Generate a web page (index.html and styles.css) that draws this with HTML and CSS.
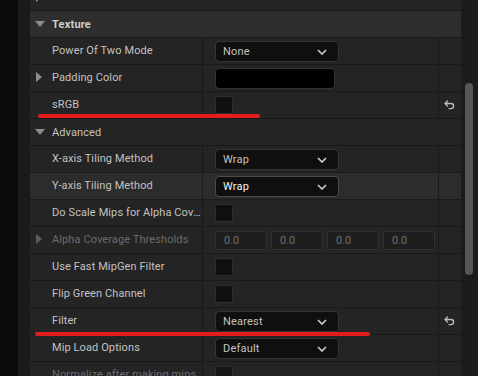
FILE: index.html
```html
<!DOCTYPE html>
<html>
<head>
<meta charset="utf-8">
<link rel="stylesheet" href="styles.css">
</head>
<body>
<div class="app">
  <div class="gutter"></div>
  <div class="edge"></div>
  <div class="view">
    <div class="list">
      <div class="row cat"><span class="arrow right"></span></div>
      <div class="row cat head"><span class="arrow down"></span><span class="title">Texture</span></div>

      <div class="row prop">
        <div class="name">Power Of Two Mode</div>
        <div class="value"><div class="combo"><span>None</span><svg class="chev" width="10" height="6" viewBox="0 0 10 6"><path d="M1 1 L5 5 L9 1"/></svg></div></div>
        <div class="reset"></div>
      </div>
      <div class="row prop">
        <div class="name"><span class="arrow right"></span>Padding Color</div>
        <div class="value"><div class="color"></div></div>
        <div class="reset"></div>
      </div>
      <div class="row prop">
        <div class="name">sRGB</div>
        <div class="value"><div class="check"></div></div>
        <div class="reset"><svg class="undo" width="11" height="10" viewBox="0 0 11 10"><path d="M3.5 1 L1 3.5 L3.5 6 M1.5 3.5 H7 A2.6 2.6 0 0 1 7 8.7 H5"/></svg></div>
      </div>

      <div class="row cat"><span class="arrow down"></span><span class="sub">Advanced</span></div>

      <div class="row prop">
        <div class="name">X-axis Tiling Method</div>
        <div class="value"><div class="combo"><span>Wrap</span><svg class="chev" width="10" height="6" viewBox="0 0 10 6"><path d="M1 1 L5 5 L9 1"/></svg></div></div>
        <div class="reset"></div>
      </div>
      <div class="row prop hover">
        <div class="name">Y-axis Tiling Method</div>
        <div class="value"><div class="combo hot"><span>Wrap</span><svg class="chev" width="10" height="6" viewBox="0 0 10 6"><path d="M1 1 L5 5 L9 1"/></svg></div></div>
        <div class="reset"></div>
      </div>
      <div class="row prop">
        <div class="name">Do Scale Mips for Alpha Coverage</div>
        <div class="value"><div class="check"></div></div>
        <div class="reset"></div>
      </div>
      <div class="row prop dim">
        <div class="name"><span class="arrow right"></span>Alpha Coverage Thresholds</div>
        <div class="value vec">
          <div class="num">0.0</div><div class="num">0.0</div><div class="num">0.0</div><div class="num">0.0</div>
        </div>
        <div class="reset"></div>
      </div>
      <div class="row prop">
        <div class="name">Use Fast MipGen Filter</div>
        <div class="value"><div class="check"></div></div>
        <div class="reset"></div>
      </div>
      <div class="row prop">
        <div class="name">Flip Green Channel</div>
        <div class="value"><div class="check"></div></div>
        <div class="reset"></div>
      </div>
      <div class="row prop">
        <div class="name">Filter</div>
        <div class="value"><div class="combo"><span>Nearest</span><svg class="chev" width="10" height="6" viewBox="0 0 10 6"><path d="M1 1 L5 5 L9 1"/></svg></div></div>
        <div class="reset"><svg class="undo" width="11" height="10" viewBox="0 0 11 10"><path d="M3.5 1 L1 3.5 L3.5 6 M1.5 3.5 H7 A2.6 2.6 0 0 1 7 8.7 H5"/></svg></div>
      </div>
      <div class="row prop">
        <div class="name">Mip Load Options</div>
        <div class="value"><div class="combo"><span>Default</span><svg class="chev" width="10" height="6" viewBox="0 0 10 6"><path d="M1 1 L5 5 L9 1"/></svg></div></div>
        <div class="reset"></div>
      </div>
      <div class="row prop dim">
        <div class="name">Normalize after making mips</div>
        <div class="value"><div class="check"></div></div>
        <div class="reset"></div>
      </div>
    </div>
    <div class="mark mark1"></div>
    <div class="mark mark2"></div>
  </div>
  <div class="scroll"><div class="thumb"></div></div>
</div>
</body>
</html>
```

FILE: styles.css
```css
html, body {
  margin: 0;
  padding: 0;
  background: #0b0b0b;
  overflow: hidden;
}
.app {
  display: flex;
  width: 478px;
  height: 376px;
  font-family: Roboto, "Noto Sans", sans-serif;
  font-size: 11px;
  color: #c2c2c2;
}
.gutter {
  width: 18px;
  background: #0b0b0b;
}
.edge {
  width: 12px;
  background: #1a1a1a;
}
.view {
  position: relative;
  width: 431px;
  overflow: hidden;
  background: #1a1a1a;
}
.list {
  margin-top: -16px;
}
.row {
  height: 26px;
  border-bottom: 1px solid #1a1a1a;
  background: #242424;
  box-sizing: content-box;
}
.row.cat {
  display: flex;
  align-items: center;
}
.row.head {
  background: #2e2e2e;
}
.title {
  font-weight: 700;
  color: #cfcfcf;
  letter-spacing: 0.2px;
}
.sub {
  color: #c2c2c2;
  letter-spacing: 0.1px;
}
.arrow {
  display: inline-block;
  width: 22px;
  height: 10px;
  flex: none;
  position: relative;
}
.arrow.down::before {
  content: "";
  position: absolute;
  left: 5px;
  top: 2px;
  border-left: 5px solid transparent;
  border-right: 5px solid transparent;
  border-top: 6px solid #8c8c8c;
}
.arrow.right::before {
  content: "";
  position: absolute;
  left: 6px;
  top: 0px;
  border-top: 5px solid transparent;
  border-bottom: 5px solid transparent;
  border-left: 6px solid #8c8c8c;
}
.row.prop {
  display: grid;
  grid-template-columns: 173px 236px 22px;
}
.row.hover {
  background: #2c2c2c;
}
.name {
  display: block;
  line-height: 26px;
  padding-left: 22px;
  border-right: 1px solid #1a1a1a;
  white-space: nowrap;
  overflow: hidden;
  text-overflow: ellipsis;
  letter-spacing: 0.1px;
  min-width: 0;
}
.name .arrow {
  margin-left: -22px;
  vertical-align: -1px;
}
.dim .name {
  color: #6c6c6c;
}
.dim .arrow.right::before {
  border-left-color: #5e5e5e;
}
.value {
  display: flex;
  align-items: center;
  padding-left: 12px;
  border-right: 1px solid #1a1a1a;
}
.reset {
  display: flex;
  align-items: center;
  justify-content: center;
}
.combo {
  width: 124px;
  height: 21px;
  box-sizing: border-box;
  border: 1px solid #353535;
  border-radius: 4px;
  background: #0f0f0f;
  display: flex;
  align-items: center;
  justify-content: space-between;
  padding: 0 11px 0 7px;
  margin-top: 1px;
  letter-spacing: 0.2px;
}
.combo.hot {
  border-color: #4a4a4a;
  color: #f2f2f2;
}
.chev path {
  fill: none;
  stroke: #cfcfcf;
  stroke-width: 1.6;
}
.color {
  width: 120px;
  height: 21px;
  box-sizing: border-box;
  background: #000;
  border: 1px solid #333;
  border-radius: 4px;
  margin-top: 1px;
}
.check {
  width: 18px;
  height: 18px;
  box-sizing: border-box;
  background: #0f0f0f;
  border: 1px solid #2e2e2e;
  border-radius: 3px;
}
.vec {
  gap: 4px;
}
.num {
  width: 52px;
  height: 19px;
  box-sizing: border-box;
  background: #1e1e1e;
  border: 1px solid #303030;
  border-radius: 3px;
  color: #6e6e6e;
  padding-left: 8px;
  line-height: 17px;
}
.dim .check {
  background: #161616;
}
.undo path {
  fill: none;
  stroke: #bdbdbd;
  stroke-width: 1.3;
  stroke-linecap: round;
  stroke-linejoin: round;
}
.undo {
  margin-left: -2px;
}
.mark {
  position: absolute;
  height: 4px;
  border-radius: 2px;
  background: #e31d1d;
}
.mark1 {
  left: 8px;
  top: 114px;
  width: 222px;
}
.mark2 {
  left: 5px;
  top: 332px;
  width: 335px;
}
.scroll {
  width: 17px;
  background: #1c1c1c;
}
.thumb {
  margin: 83px 0 0 4px;
  width: 8px;
  height: 192px;
  border-radius: 4px;
  background: #575757;
}
```
